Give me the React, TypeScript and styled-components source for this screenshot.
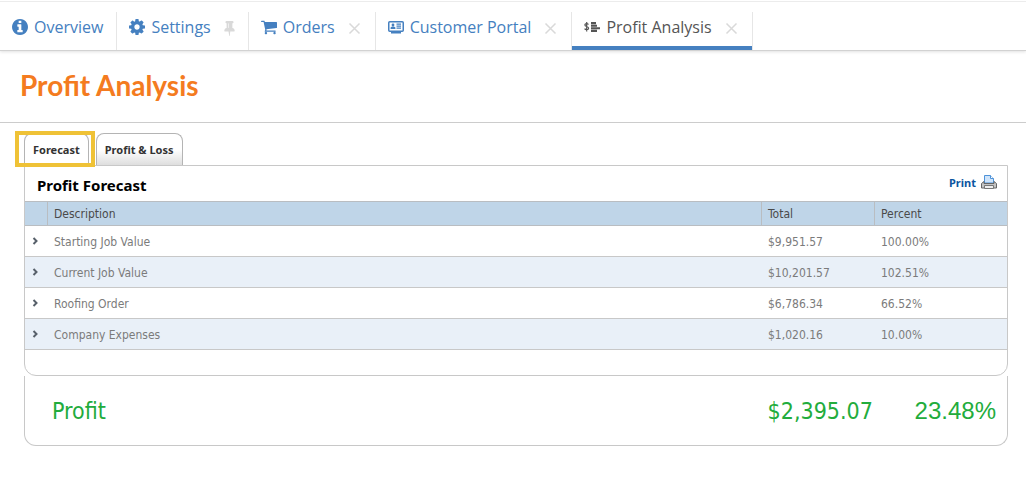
import React from 'react';
import styled, { createGlobalStyle, css } from 'styled-components';

const GlobalStyle = createGlobalStyle`
  *, *::before, *::after { box-sizing: border-box; }
  body { margin: 0; background: #fff; font-family: 'DejaVu Sans Condensed', Tahoma, sans-serif; font-size: 12px; color: #7b7b7b; }
  button { font: inherit; background: none; border: 0; padding: 0; cursor: pointer; }
`;

const TabBar = styled.nav`
  display: flex;
  height: 51px;
  padding-top: 12px;
  border-bottom: 1px solid #d2d2d2;
  box-shadow: inset 0 1px #fff, inset 0 2px #ececec, 0 1px 3px rgba(0, 0, 0, 0.12);
`;

const TabItem = styled.div<{ $active?: boolean }>`
  display: flex;
  align-items: center;
  gap: 13px;
  padding: 0 13px 8px 12px;
  border-right: 1px solid #e6e6e6;
  ${(p) => p.$active && css`
    box-shadow: inset 0 -4px #4580c0, 1px 0 #e6e6e6;
    border-right: 0;
  `}
`;

const TabLink = styled.a<{ $active?: boolean }>`
  display: flex;
  align-items: center;
  gap: 6px;
  color: ${(p) => (p.$active ? '#555' : '#4580c0')};
  font: 16px/24px 'Open Sans', sans-serif;
  text-decoration: none;
  white-space: nowrap;
`;

const TabAction = styled.button`
  display: flex;
  color: #d9d9d9;
  padding-top: 2px;
`;

const PageHeader = styled.header`
  padding: 15px 20px 17px;
  border-bottom: 1px solid #ccc;
`;

const PageTitle = styled.h1`
  margin: 0;
  color: #f47b20;
  font: bold 28px/39px Lato, sans-serif;
`;

const Main = styled.main`
  padding: 10px 18px 20px 24px;
`;

const SubTabs = styled.div`
  display: flex;
  gap: 7px;
`;

const SubTab = styled.button<{ $active?: boolean }>`
  height: 32px;
  padding: 0 8px;
  border: 1px solid #b4b4b4;
  border-bottom: 0;
  border-radius: 8px 8px 0 0;
  background: ${(p) => (p.$active ? '#fff' : 'linear-gradient(#fff 50%, #dedede)')};
  color: #333;
  font: bold 11px/16px 'Noto Sans', sans-serif;
  position: relative;
  ${(p) => p.$active && css`
    &::after {
      content: '';
      position: absolute;
      inset: -3px -7px -2px -10px;
      border: 4px solid #efc236;
    }
  `}
`;

const Panel = styled.section`
  border: 1px solid #c8c8c8;
  border-radius: 0 0 12px 12px;
  padding-bottom: 25px;
`;

const PanelHeader = styled.div`
  display: flex;
  justify-content: space-between;
  align-items: center;
  height: 35px;
  padding: 0 10px 2px 12px;
`;

const PanelTitle = styled.h2`
  margin: 0;
  padding-top: 4px;
  color: #000;
  font: bold 15px/20px 'Noto Sans', sans-serif;
`;

const PrintButton = styled.button`
  display: flex;
  align-items: center;
  gap: 5px;
  color: #0b559f;
  font: bold 11px/16px 'Noto Sans', sans-serif;
`;

const Table = styled.table`
  width: 100%;
  border-collapse: separate;
  border-spacing: 0;
  table-layout: fixed;
`;

const HeadCell = styled.th`
  height: 25px;
  padding: 0 6px;
  background: #bfd5e8;
  border: solid #b9bdc1;
  border-width: 1px 0 1px 1px;
  color: #4a4a4a;
  font-weight: normal;
  text-align: left;
  line-height: 16px;
  &:first-child { border-left: 0; }
`;

const Row = styled.tr`
  &:nth-child(even) { background: #e9f0f8; }
`;

const Cell = styled.td`
  height: 31px;
  padding: 1px 6px 0 7px;
  border-bottom: 1px solid #c8c8c8;
  line-height: 16px;
`;

const Expander = styled.button`
  display: flex;
  padding-bottom: 2px;
  color: #57606a;
`;

const Summary = styled.section`
  display: flex;
  align-items: center;
  height: 70px;
  padding: 1px 11px 0 27px;
  border: 1px solid #c8c8c8;
  border-top: 0;
  border-radius: 0 0 12px 12px;
  color: #22ac3c;
  font: 23px/32px 'DejaVu Sans Condensed', Tahoma, sans-serif;
`;

const SummaryLabel = styled.span`
  flex: 1;
`;

const SummaryTotal = styled.span`
  width: 147px;
`;

const SummaryPercent = styled.span`
  font: 24px/32px 'Liberation Sans', Arial, sans-serif;
`;

const InfoIcon = () => (
  <svg width="16" height="16" viewBox="128 128 1536 1536" fill="currentColor" aria-hidden="true">
    <path d="M1152 1376v-160q0-14-9-23t-23-9h-96v-512q0-14-9-23t-23-9h-320q-14 0-23 9t-9 23v160q0 14 9 23t23 9h96v320h-96q-14 0-23 9t-9 23v160q0 14 9 23t23 9h448q14 0 23-9t9-23zm-128-896v-160q0-14-9-23t-23-9h-192q-14 0-23 9t-9 23v160q0 14 9 23t23 9h192q14 0 23-9t9-23zm640 416q0 209-103 385.5t-279.5 279.5-385.5 103-385.5-103-279.5-279.5-103-385.5 103-385.5 279.5-279.5 385.5-103 385.5 103 279.5 279.5 103 385.5z" />
  </svg>
);

const GearIcon = () => (
  <svg width="16" height="16" viewBox="128 128 1536 1536" fill="currentColor" aria-hidden="true">
    <path d="M1152 896q0-106-75-181t-181-75-181 75-75 181 75 181 181 75 181-75 75-181zm512-109v222q0 12-8 23t-20 13l-185 28q-19 54-39 91 35 50 107 138 10 12 10 25t-9 23q-27 37-99 108t-94 71q-12 0-26-9l-138-108q-44 23-91 38-16 136-29 186-7 28-36 28h-222q-14 0-24.5-8.5t-11.5-21.5l-28-184q-49-16-90-37l-141 107q-10 9-25 9-14 0-25-11-126-114-165-168-7-10-7-23 0-12 8-23 15-21 51-66.5t54-70.5q-27-50-41-99l-183-27q-13-2-21-12.5t-8-23.5v-222q0-12 8-23t19-13l186-28q14-46 39-92-40-57-107-138-10-12-10-24 0-10 9-23 26-36 98.5-107.5t94.5-71.5q13 0 26 10l138 107q44-23 91-38 16-136 29-186 7-28 36-28h222q14 0 24.5 8.5t11.5 21.5l28 184q49 16 90 37l142-107q9-9 24-9 13 0 25 10 129 119 165 170 7 8 7 22 0 12-8 23-15 21-51 66.5t-54 70.5q26 50 41 98l183 28q13 2 21 12.5t8 23.5z" />
  </svg>
);

const CartIcon = () => (
  <svg width="16" height="15" viewBox="64 192 1664 1536" fill="currentColor" aria-hidden="true">
    <path d="M704 1536q0 52-38 90t-90 38-90-38-38-90 38-90 90-38 90 38 38 90zm896 0q0 52-38 90t-90 38-90-38-38-90 38-90 90-38 90 38 38 90zm128-1088v512q0 24-16.5 42.5t-40.5 21.5l-1044 122q13 60 13 70 0 16-24 64h920q26 0 45 19t19 45-19 45-45 19h-1024q-26 0-45-19t-19-45q0-11 8-31.5t16-36 21.5-40 15.5-29.5l-177-823h-204q-26 0-45-19t-19-45 19-45 45-19h256q16 0 28.5 6.5t19.5 15.5 13 24.5 8 26 5.5 29.5 4.5 26h1201q26 0 45 19t19 45z" />
  </svg>
);

const PinIcon = () => (
  <svg width="11" height="15" viewBox="320 128 1152 1664" fill="currentColor" aria-hidden="true">
    <path d="M800 864v-448q0-14-9-23t-23-9-23 9-9 23v448q0 14 9 23t23 9 23-9 9-23zm672 352q0 26-19 45t-45 19h-429l-51 483q-2 12-10.5 20.5t-20.5 8.5h-1q-27 0-32-27l-76-485h-404q-26 0-45-19t-19-45q0-123 78.5-221.5t177.5-98.5v-512q-52 0-90-38t-38-90 38-90 90-38h640q52 0 90 38t38 90-38 90-90 38v512q99 0 177.5 98.5t78.5 221.5z" />
  </svg>
);

const CloseIcon = () => (
  <svg width="14" height="13" viewBox="0 0 14 13" fill="none" stroke="currentColor" strokeWidth="1.5" aria-hidden="true">
    <path d="M1.5 1.5l10 10M11.5 1.5l-10 10" />
  </svg>
);

const PortalIcon = () => (
  <svg width="16" height="16" viewBox="0 0 16 16" aria-hidden="true">
    <rect x="0.75" y="2.75" width="14.5" height="9.5" rx="1" fill="none" stroke="currentColor" strokeWidth="1.5" />
    <g fill="currentColor">
      <path d="M5 12h6v1h2v1.500H3V13h2z" />
      <circle cx="5" cy="6" r="1.4" />
      <path d="M2.600 10V9c0-1 1-1.500 2.400-1.500S7.400 8 7.400 9v1z" />
      <path d="M8.500 4.500H13v1.300H8.500zM8.500 6.500H13v1.300H8.500zM8.500 8.500H13v1.300H8.500z" />
    </g>
  </svg>
);

const ProfitIcon = () => (
  <svg width="16" height="16" viewBox="0 0 16 16" aria-hidden="true">
    <path d="M4.500 5.500C4 4.800 3.300 4.600 2.600 4.600 1.500 4.600.9 5.200.9 6c0 2 3.700 1 3.700 3.200 0 .9-.8 1.500-1.900 1.500-.9 0-1.700-.4-2.100-1.100M2.700 3v9.500" fill="none" stroke="currentColor" strokeWidth="1.200" />
    <path d="M7 3h5v2.200H7zM7 5.700h6v2H7zM7 8.200h9v2H7zM7 10.700h6v2.200H7z" fill="currentColor" />
  </svg>
);

const PrinterIcon = () => (
  <svg width="16" height="15" viewBox="0 0 16 15" aria-hidden="true">
    <path d="M3.500 8V.5h6l3 3V8z" fill="#cfe4fa" stroke="#4f93d8" />
    <path d="M9.500.5v3h3" fill="#fff" stroke="#4f93d8" />
    <path d="M3 6.500L.5 8.500v4.500h15V8.500L13 6.500v2H3z" fill="#c4c4c4" stroke="#666" strokeLinejoin="round" />
    <path d="M3.500 10.500h9v3h-9z" fill="#eee" stroke="#777" />
  </svg>
);

const ChevronIcon = () => (
  <svg width="7" height="8" viewBox="0 0 7 8" fill="none" stroke="currentColor" strokeWidth="2" aria-hidden="true">
    <path d="M1.500 1L4.500 4l-3 3" />
  </svg>
);

type Tab = { label: string; icon: React.ReactNode; action?: 'pin' | 'close'; active?: boolean };

const tabs: Tab[] = [
  { label: 'Overview', icon: <InfoIcon /> },
  { label: 'Settings', icon: <GearIcon />, action: 'pin' },
  { label: 'Orders', icon: <CartIcon />, action: 'close' },
  { label: 'Customer Portal', icon: <PortalIcon />, action: 'close' },
  { label: 'Profit Analysis', icon: <ProfitIcon />, action: 'close', active: true },
];

const rows = [
  ['Starting Job Value', '$9,951.57', '100.00%'],
  ['Current Job Value', '$10,201.57', '102.51%'],
  ['Roofing Order', '$6,786.34', '66.52%'],
  ['Company Expenses', '$1,020.16', '10.00%'],
];

export default function App() {
  return (
    <>
      <GlobalStyle />
      <TabBar>
        {tabs.map((tab) => (
          <TabItem key={tab.label} $active={tab.active}>
            <TabLink href="#" $active={tab.active}>
              {tab.icon}
              {tab.label}
            </TabLink>
            {tab.action && (
              <TabAction type="button" aria-label={`${tab.action} ${tab.label}`}>
                {tab.action === 'pin' ? <PinIcon /> : <CloseIcon />}
              </TabAction>
            )}
          </TabItem>
        ))}
      </TabBar>
      <PageHeader>
        <PageTitle>Profit Analysis</PageTitle>
      </PageHeader>
      <Main>
        <SubTabs>
          <SubTab type="button" $active>Forecast</SubTab>
          <SubTab type="button">Profit &amp; Loss</SubTab>
        </SubTabs>
        <Panel>
          <PanelHeader>
            <PanelTitle>Profit Forecast</PanelTitle>
            <PrintButton type="button">
              Print
              <PrinterIcon />
            </PrintButton>
          </PanelHeader>
          <Table>
            <colgroup>
              <col style={{ width: 22 }} />
              <col />
              <col style={{ width: 113 }} />
              <col style={{ width: 133 }} />
            </colgroup>
            <thead>
              <tr>
                <HeadCell aria-label="Expand" />
                <HeadCell>Description</HeadCell>
                <HeadCell>Total</HeadCell>
                <HeadCell>Percent</HeadCell>
              </tr>
            </thead>
            <tbody>
              {rows.map(([description, total, percent]) => (
                <Row key={description}>
                  <Cell>
                    <Expander type="button" aria-label={`Expand ${description}`}>
                      <ChevronIcon />
                    </Expander>
                  </Cell>
                  <Cell>{description}</Cell>
                  <Cell>{total}</Cell>
                  <Cell>{percent}</Cell>
                </Row>
              ))}
            </tbody>
          </Table>
        </Panel>
        <Summary>
          <SummaryLabel>Profit</SummaryLabel>
          <SummaryTotal>$2,395.07</SummaryTotal>
          <SummaryPercent>23.48%</SummaryPercent>
        </Summary>
      </Main>
    </>
  );
}
